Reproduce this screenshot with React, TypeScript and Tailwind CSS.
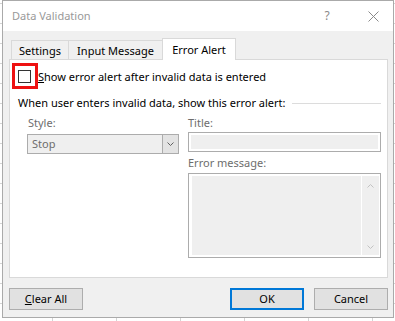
function Chevron({ up, className }: { up?: boolean; className: string }) {
  return (
    <svg width="7" height="4" viewBox="0 0 7 4" className={className} fill="none" stroke="currentColor">
      <path d={up ? "M0.5 3.5l3-3 3 3" : "M0.5 0.5l3 3 3-3"} />
    </svg>
  );
}

export default function App() {
  return (
    <div className="relative h-[321px] w-[395px] overflow-hidden bg-white font-['Noto_Sans',sans-serif] text-[11px] leading-[16px] text-black [background-image:linear-gradient(to_right,#d4d4d4_1px,transparent_1px),linear-gradient(to_bottom,#d4d4d4_1px,transparent_1px)] [background-position:52px_3px] [background-size:64px_20px]">
      <div className="absolute left-[2px] top-0 flex h-[318px] w-[392px] flex-col border border-[#aaaaaa] bg-[#f0f0f0]">
        {/* title bar */}
        <div className="flex h-[30px] items-center bg-white pl-[9px] pr-[14px] text-[#999999]">
          <span className="flex-1 text-[11px]">Data Validation</span>
          <span className="mr-[36px] w-[10px] text-center text-[12px] text-[#8a8a8a]">?</span>
          <svg width="11" height="11" viewBox="0 0 11 11" className="text-[#8a8a8a]" stroke="currentColor">
            <path d="M0.5 0.5l10 10M10.5 0.5l-10 10" />
          </svg>
        </div>

        <div className="flex flex-1 flex-col pl-[6px] pt-[7px]">
          {/* tabs */}
          <div className="flex h-[21px] items-end pl-[2px]">
            <div className="flex h-[19px] w-[57px] justify-center border-l border-t border-[#d9d9d9] pt-[2px]">Settings</div>
            <div className="flex h-[19px] w-[94px] justify-center border-l border-t border-[#d9d9d9] pt-[2px]">Input Message</div>
            <div className="relative z-10 -mb-px flex h-[22px] w-[74px] justify-center border-x border-t border-[#d9d9d9] bg-white pt-[3px]">
              Error Alert
            </div>
          </div>

          {/* panel */}
          <div className="relative flex h-[219px] w-[379px] flex-col border border-[#d9d9d9] bg-white pl-[8px] pr-[6px] pt-[10px]">
            <div className="flex h-[13px] items-center">
              <span className="h-[13px] w-[13px] border border-[#333333] bg-white" />
              <span className="ml-[7px]">
                <span className="underline">S</span>how error alert after invalid data is entered
              </span>
            </div>

            <div className="mt-[12px] flex h-[16px] items-center">
              <span>When user enters invalid data, show this error alert:</span>
              <span className="ml-[6px] h-px flex-1 bg-[#dcdcdc]" />
            </div>

            <div className="mt-[4px] flex">
              <div className="ml-[9px] w-[152px]">
                <div className="pl-[1px] text-[#6d6d6d]">Style:</div>
                <div className="mt-[3px] flex h-[20px] border border-[#acacac] bg-[#efefef]">
                  <span className="flex-1 pl-[4px] leading-[18px] text-[#6d6d6d]">Stop</span>
                  <span className="flex w-[16px] items-center justify-center border-l border-[#acacac] bg-[#e3e3e3]">
                    <Chevron className="text-[#606060]" />
                  </span>
                </div>
              </div>

              <div className="ml-[9px] flex w-[193px] flex-col">
                <div className="text-[#6d6d6d]">Title:</div>
                <div className="mt-[1px] h-[20px] border border-[#acacac] bg-white p-[2px]">
                  <div className="h-full bg-[#efefef]" />
                </div>
                <div className="mt-[3px] text-[#6d6d6d]">Error message:</div>
                <div className="mt-[2px] flex h-[85px] border border-[#acacac] bg-white py-[2px] pl-[3px] pr-[1px]">
                  <div className="flex-1 bg-[#efefef]" />
                  <div className="ml-px flex w-[17px] flex-col items-center justify-between bg-[#efefef] pb-[6px] pt-[8px]">
                    <Chevron up className="text-[#c2c2c2]" />
                    <Chevron className="text-[#c2c2c2]" />
                  </div>
                </div>
              </div>
            </div>

            <div className="absolute left-[2px] top-[3px] h-[26px] w-[26px] border-[3px] border-[#ee1111]" />
          </div>

          {/* buttons */}
          <div className="mt-[10px] flex w-[379px]">
            <button className="h-[22px] w-[74px] border border-[#adadad] bg-[#e1e1e1]">
              <span className="underline">C</span>lear All
            </button>
            <span className="flex-1" />
            <button className="h-[22px] w-[74px] border-2 border-[#0078d7] bg-[#e1e1e1]">OK</button>
            <button className="ml-[10px] h-[22px] w-[74px] border border-[#adadad] bg-[#e1e1e1]">Cancel</button>
          </div>
        </div>
      </div>
    </div>
  );
}
